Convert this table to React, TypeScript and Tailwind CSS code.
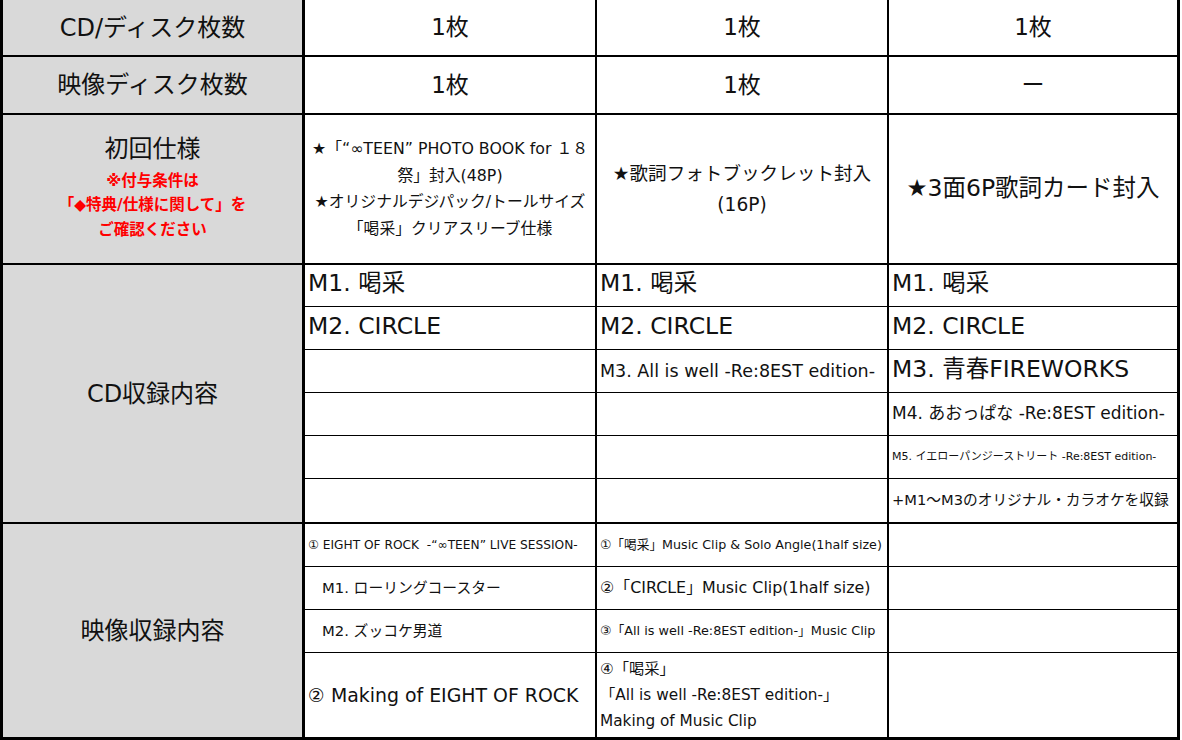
import React from 'react';

const font = { fontFamily: '"DejaVu Sans", "Noto Sans CJK JP", sans-serif' };

const Head = ({ children, className = '' }: { children: React.ReactNode; className?: string }) => (
  <div className={`w-[302px] shrink-0 border-r-[3px] border-black bg-[#d9d9d9] flex flex-col items-center justify-center text-center text-[#111] ${className}`}>
    {children}
  </div>
);

const Cell = ({ children, className = '', last = false }: { children?: React.ReactNode; className?: string; last?: boolean }) => (
  <div className={`${last ? 'w-[288px]' : 'w-[292px] border-r-2 border-black'} shrink-0 flex items-center overflow-hidden whitespace-pre text-[#111] ${className}`}>
    {children}
  </div>
);

type Sub = { cells: [React.ReactNode, React.ReactNode, React.ReactNode]; h: string; cls?: [string, string, string] };

const cdRows: Sub[] = [
  { h: 'h-[42px]', cells: ['M1. 喝采', 'M1. 喝采', 'M1. 喝采'], cls: ['text-[23.5px] pb-[3px]', 'text-[23.5px] pb-[3px]', 'text-[23.5px] pb-[3px]'] },
  { h: 'h-[43px]', cells: ['M2. CIRCLE', 'M2. CIRCLE', 'M2. CIRCLE'], cls: ['text-[23.5px] pb-[3px]', 'text-[23.5px] pb-[3px]', 'text-[23.5px] pb-[3px]'] },
  { h: 'h-[43px]', cells: ['', 'M3. All is well -Re:8EST edition-', 'M3. 青春FIREWORKS'], cls: ['', 'text-[17.5px]', 'text-[23.5px] pb-[2px]'] },
  { h: 'h-[43px]', cells: ['', '', 'M4. あおっぱな -Re:8EST edition-'], cls: ['', '', 'text-[17px]'] },
  { h: 'h-[43px]', cells: ['', '', 'M5. イエローパンジーストリート -Re:8EST edition-'], cls: ['', '', 'text-[11px]'] },
  { h: 'h-[43px]', cells: ['', '', '+M1～M3のオリジナル・カラオケを収録'], cls: ['', '', 'text-[14.7px]'] },
];

const videoRows: Sub[] = [
  { h: 'h-[43px]', cells: ['① EIGHT OF ROCK  -“∞TEEN” LIVE SESSION-', '①「喝采」Music Clip & Solo Angle(1half size)', ''], cls: ['text-[12.2px]', 'text-[12.7px]', ''] },
  { h: 'h-[43px]', cells: [<span className="pl-[14px]">M1. ローリングコースター</span>, '②「CIRCLE」Music Clip(1half size)', ''], cls: ['text-[14.8px]', 'text-[15.9px]', ''] },
  { h: 'h-[43px]', cells: [<span className="pl-[14px]">M2. ズッコケ男道</span>, '③「All is well -Re:8EST edition-」Music Clip', ''], cls: ['text-[14.8px]', 'text-[12.8px]', ''] },
  {
    h: 'h-[84px]',
    cells: [
      '② Making of EIGHT OF ROCK',
      <div className="leading-[26px]">
        <div>④「喝采」</div>
        <div>「All is well -Re:8EST edition-」</div>
        <div>Making of Music Clip</div>
      </div>,
      '',
    ],
    cls: ['text-[18.9px]', 'text-[15.3px]', ''],
  },
];

const SubRows = ({ rows }: { rows: Sub[] }) => (
  <div className="flex flex-col">
    {rows.map((r, i) => (
      <div key={i} className={`flex ${r.h} ${i < rows.length - 1 ? 'border-b border-black' : ''}`}>
        {r.cells.map((c, j) => (
          <Cell key={j} last={j === 2} className={`pl-[3px] ${r.cls ? r.cls[j] : ''}`}>
            {c}
          </Cell>
        ))}
      </div>
    ))}
  </div>
);

export default function App() {
  return (
    <div className="w-[1182px] h-[740px] bg-white" style={font}>
      <div className="w-[1180px] border-l-[3px] border-r-[3px] border-b-[3px] border-black">
        {/* disc counts */}
        <div className="flex h-[57px] border-b-2 border-black">
          <Head className="text-[24px]">CD/ディスク枚数</Head>
          <Cell className="justify-center text-[23px]">1枚</Cell>
          <Cell className="justify-center text-[23px]">1枚</Cell>
          <Cell last className="justify-center text-[23px]">1枚</Cell>
        </div>
        <div className="flex h-[58px] border-b-2 border-black">
          <Head className="text-[24px]">映像ディスク枚数</Head>
          <Cell className="justify-center text-[23px]">1枚</Cell>
          <Cell className="justify-center text-[23px]">1枚</Cell>
          <Cell last className="justify-center text-[23px]">ー</Cell>
        </div>

        {/* first press spec */}
        <div className="flex h-[150px] border-b-2 border-black">
          <Head>
            <div className="text-[24px] leading-[30px] mb-[5px] mt-[-2px]">初回仕様</div>
            <div className="text-[15.5px] leading-[24.5px] font-bold text-[#ff0000]">
              <div>※付与条件は</div>
              <div>「◆特典/仕様に関して」を</div>
              <div>ご確認ください</div>
            </div>
          </Head>
          <Cell className="justify-center text-center text-[15.8px] leading-[26.5px]">
            <div>
              <div>★「“∞TEEN” PHOTO BOOK for １８</div>
              <div>祭」封入(48P)</div>
              <div>★オリジナルデジパック/トールサイズ</div>
              <div>「喝采」クリアスリーブ仕様</div>
            </div>
          </Cell>
          <Cell className="justify-center text-center text-[18.6px] leading-[31px]">
            <div>
              <div>★歌詞フォトブックレット封入</div>
              <div>(16P)</div>
            </div>
          </Cell>
          <Cell last className="justify-center text-[23.5px]">★3面6P歌詞カード封入</Cell>
        </div>

        {/* CD contents */}
        <div className="flex border-b-2 border-black">
          <Head className="text-[24px]">CD収録内容</Head>
          <SubRows rows={cdRows} />
        </div>

        {/* video contents */}
        <div className="flex">
          <Head className="text-[24px]">映像収録内容</Head>
          <SubRows rows={videoRows} />
        </div>
      </div>
    </div>
  );
}
